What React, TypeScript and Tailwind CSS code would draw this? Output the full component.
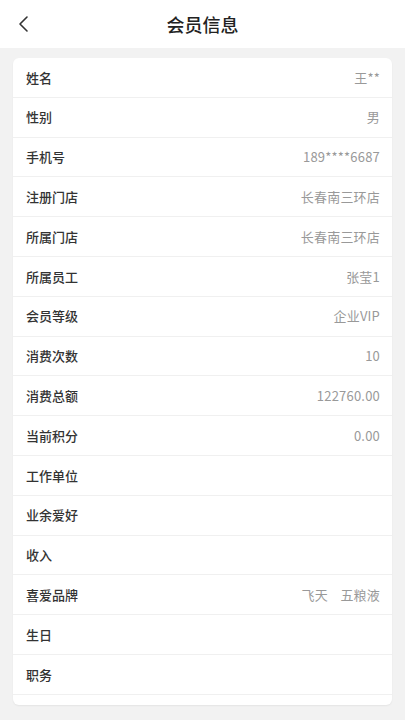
import React from 'react';

const rows: [string, string][] = [
  ['姓名', '王**'],
  ['性别', '男'],
  ['手机号', '189****6687'],
  ['注册门店', '长春南三环店'],
  ['所属门店', '长春南三环店'],
  ['所属员工', '张莹1'],
  ['会员等级', '企业VIP'],
  ['消费次数', '10'],
  ['消费总额', '122760.00'],
  ['当前积分', '0.00'],
  ['工作单位', ''],
  ['业余爱好', ''],
  ['收入', ''],
  ['喜爱品牌', '飞天\u00a0\u00a0\u00a0\u00a0五粮液'],
  ['生日', ''],
  ['职务', ''],
];

export default function App() {
  return (
    <div
      className="w-[405px] h-[720px] overflow-hidden bg-[#f2f2f2] flex flex-col"
      style={{ fontFamily: '"Noto Sans CJK SC", "Noto Sans", sans-serif' }}
    >
      <div className="h-[48px] bg-white flex items-center relative shrink-0">
        <div className="absolute left-[14px] top-[12px]">
          <svg width="20" height="24" viewBox="0 0 20 24" fill="none">
            <path d="M13 5 L6 12 L13 19" stroke="#333" strokeWidth="1.6" strokeLinecap="round" strokeLinejoin="round" />
          </svg>
        </div>
        <div className="flex-1 text-center text-[18px] font-medium text-[#222] leading-none">会员信息</div>
      </div>

      <div className="mx-[13px] mt-[10px] bg-white rounded-[6px] shadow-[0_1px_2px_rgba(0,0,0,0.06)] pb-[10px]">
        {rows.map(([label, value]) => (
          <div
            key={label}
            className="h-[39.8px] flex items-center justify-between pl-[13px] pr-[12px] border-b border-[#f0f0f0]"
          >
            <span className="text-[13px] text-[#333] font-medium">{label}</span>
            <span className="text-[13px] text-[#999] tracking-[0.2px]">{value}</span>
          </div>
        ))}
      </div>
    </div>
  );
}
